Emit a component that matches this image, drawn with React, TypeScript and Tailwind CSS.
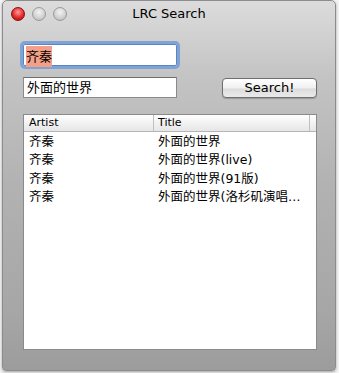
const font = { fontFamily: '"Lucida Grande", "DejaVu Sans", "Noto Sans CJK SC", sans-serif' };

const rows = [
  { artist: '齐秦', title: '外面的世界' },
  { artist: '齐秦', title: '外面的世界(live)' },
  { artist: '齐秦', title: '外面的世界(91版)' },
  { artist: '齐秦', title: '外面的世界(洛杉矶演唱…' },
];

function TrafficLights() {
  return (
    <div className="flex items-center gap-[7px]">
      <div className="h-[14px] w-[14px] rounded-full border border-[#8a1010] bg-[radial-gradient(circle_at_50%_35%,#ff9a9a,#e02020_60%,#a01010)]" />
      <div className="h-[14px] w-[14px] rounded-full border border-[#9a9a9a] bg-[radial-gradient(circle_at_50%_35%,#f2f2f2,#d0d0d0_60%,#b4b4b4)]" />
      <div className="h-[14px] w-[14px] rounded-full border border-[#9a9a9a] bg-[radial-gradient(circle_at_50%_35%,#f2f2f2,#d0d0d0_60%,#b4b4b4)]" />
    </div>
  );
}

export default function App() {
  return (
    <div className="h-[373px] w-[339px] bg-[#f4f4f4] pl-[2px] pr-[3px]" style={font}>
      <div className="flex h-[371px] flex-col rounded-t-[5px] rounded-b-[4px] border border-[#8c8c8c] bg-[linear-gradient(#dcdcdc,#c4c4c4_20%,#b2b2b2_50%,#a6a6a6_85%,#9c9c9c)] shadow-[0_1px_3px_rgba(0,0,0,0.35)]">
        <div className="relative flex h-[24px] items-center px-[8px] pt-[1px]">
          <TrafficLights />
          <div className="absolute inset-x-0 top-[5px] text-center text-[13px] leading-[16px] text-black">
            LRC Search
          </div>
        </div>
        <div className="flex flex-col px-[20px] pt-[19px]">
          <div className="flex">
            <div className="h-[22px] w-[154px] rounded-[2px] bg-white px-[3px] shadow-[0_0_0_3px_#7fa3d4,0_0_0_1px_#5b84c4_inset]">
              <span className="inline-block bg-[#f4a088] text-[13px] leading-[21px] text-black">齐秦</span>
            </div>
          </div>
          <div className="mt-[11px] flex items-center justify-between">
            <div className="h-[21px] w-[154px] border border-[#8a8a8a] border-t-[#6e6e6e] bg-white px-[3px] text-[13px] leading-[19px] text-black">
              外面的世界
            </div>
            <button className="mr-[-2px] h-[20px] w-[95px] rounded-[4px] border border-[#6f6f6f] bg-[linear-gradient(#ffffff,#f0f0f0_50%,#dcdcdc_55%,#eaeaea)] text-[13px] leading-[18px] text-black shadow-[0_1px_1px_rgba(0,0,0,0.2)]">
              Search!
            </button>
          </div>
          <div className="mt-[16px] mr-[-2px] flex h-[236px] flex-col border border-[#8a8a8a] bg-white">
            <div className="flex h-[17px] border-b border-[#b5b5b5] bg-[linear-gradient(#ffffff,#f2f2f2_50%,#e6e6e6)] text-[11px] leading-[16px] text-black">
              <div className="w-[130px] border-r border-[#c0c0c0] pl-[5px]">Artist</div>
              <div className="flex-1 border-r border-[#c0c0c0] pl-[4px]">Title</div>
              <div className="w-[6px]" />
            </div>
            <div className="pt-[1px]">
              {rows.map((r, i) => (
                <div key={i} className="flex h-[18.4px] text-[12.5px] leading-[18px] text-black">
                  <div className="w-[130px] pl-[5px]">{r.artist}</div>
                  <div className="flex-1 pl-[4px]">{r.title}</div>
                </div>
              ))}
            </div>
          </div>
        </div>
      </div>
    </div>
  );
}
